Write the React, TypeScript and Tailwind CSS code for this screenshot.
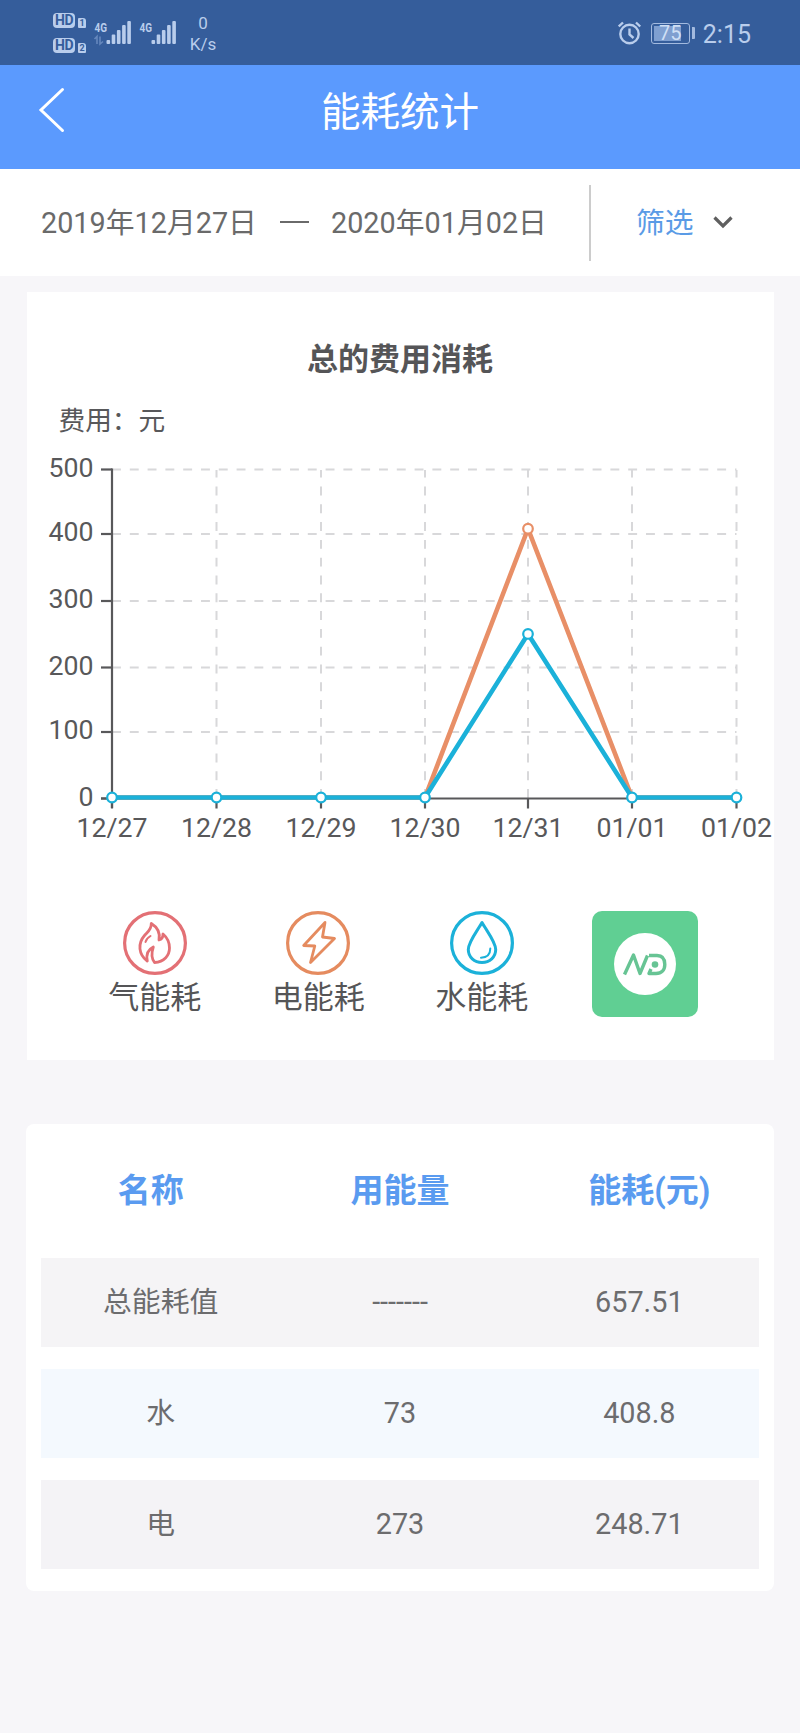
import type { ReactNode } from 'react';

const DAYS = [
  { label: '12/27', x: 112, electric: 0, water: 0 },
  { label: '12/28', x: 216.5, electric: 0, water: 0 },
  { label: '12/29', x: 321, electric: 0, water: 0 },
  { label: '12/30', x: 425, electric: 0, water: 0 },
  { label: '12/31', x: 528, electric: 408.8, water: 248.71 },
  { label: '01/01', x: 632, electric: 0, water: 0 },
  { label: '01/02', x: 736.5, electric: 0, water: 0 },
];

const Y_TICKS = [
  { value: 500, y: 469.5 },
  { value: 400, y: 534 },
  { value: 300, y: 601 },
  { value: 200, y: 667.5 },
  { value: 100, y: 732 },
  { value: 0, y: 798.5 },
];

const ROWS = [
  { name: '总能耗值', usage: '-------', cost: '657.51', bg: 'bg-[#f5f4f6]' },
  { name: '水', usage: '73', cost: '408.8', bg: 'bg-[#f4f9fe]' },
  { name: '电', usage: '273', cost: '248.71', bg: 'bg-[#f4f3f6]' },
];

const toY = (value: number) => 797.5 - value * 0.6575;

function HdBadge({ sim }: { sim: number }) {
  return (
    <div className="flex items-end gap-[3px]">
      <span className="w-[22px] h-[15px] rounded-[4px] bg-[#b9cdec] text-[#355d9b] text-[14px] leading-[15px] font-bold text-center tracking-[-0.5px]">
        HD
      </span>
      <span className="w-2 h-[10px] rounded-[1px] rounded-tr-[3px] bg-[#b9cdec] text-[#355d9b] text-[9px] leading-[10px] font-bold text-center">
        {sim}
      </span>
    </div>
  );
}

function Signal({ data }: { data?: boolean }) {
  return (
    <svg className="overflow-visible" width="38" height="26" viewBox="0 -2 38 26" fill="#b9cdec">
      <text x="0.5" y="10.500" fontSize="13.500" fontWeight="700" textLength="12.500" lengthAdjust="spacingAndGlyphs">
        4G
      </text>
      {data && (
        <path d="M0.5 18l2.5-2.500V23M6 15.500V23l3-2.500" fill="none" stroke="#6688bd" strokeWidth="1.600" />
      )}
      <rect x="12.500" y="19" width="3.600" height="4" rx="1" />
      <rect x="17.700" y="13.500" width="3.600" height="9.500" rx="1" />
      <rect x="22.900" y="9" width="3.600" height="14" rx="1" />
      <rect x="28.100" y="4" width="3.600" height="19" rx="1" />
      <rect x="33.300" y="0" width="3.600" height="23" rx="1" />
    </svg>
  );
}

function StatusBar() {
  return (
    <div className="h-[65px] bg-[#355d9b] text-[#b9cdec] flex items-start pl-[53px] pr-[49px]">
      <div className="flex flex-col gap-[10px] pt-[13px]">
        <HdBadge sim={1} />
        <HdBadge sim={2} />
      </div>
      <div className="flex gap-[7px] pt-[19px] ml-2">
        <Signal data />
        <Signal />
      </div>
      <div className="ml-[11px] pt-[13px] w-[30px] text-center text-[17px] leading-[20.5px]">
        <div>0</div>
        <div>K/s</div>
      </div>
      <div className="ml-auto flex items-center pt-[19px] h-[47px]">
        <svg width="24" height="24" viewBox="0 0 24 24" fill="none" stroke="#b9cdec" strokeWidth="2.400">
          <circle cx="11.500" cy="13" r="9.200" />
          <path d="M11.500 7.500v6l4 3.500M0.800 5.500L5 1.500M22.200 5.500L18 1.500" />
        </svg>
        <div className="ml-[9px] w-[39px] h-[21px] rounded-[3px] border border-[#a3badf] p-[2px]">
          <div className="w-[27px] h-[15px] flex bg-[#7f9fd0]">
            <span className="w-[33px] shrink-0 text-[20px] leading-[15px] text-center text-[#cfdff5]">75</span>
          </div>
        </div>
        <div className="ml-[2px] w-[3px] h-3 bg-[#a3badf] rounded-r-[1px]" />
        <span className="ml-[8px] mt-[2px] text-[25px] leading-none">2:15</span>
      </div>
    </div>
  );
}

function Header() {
  return (
    <header className="h-[104px] bg-[#5b9afe] grid grid-cols-[1fr_auto_1fr] items-start">
      <svg className="ml-[38px] mt-[21px]" width="28" height="48" viewBox="0 0 28 48" fill="none">
        <path d="M24.500 3.500L3 24l21.500 20.500" stroke="#fff" strokeWidth="3" strokeLinecap="round" />
      </svg>
      <h1 className="text-[39.500px] leading-[96px] text-white">能耗统计</h1>
    </header>
  );
}

function DateBar() {
  return (
    <div className="h-[107px] bg-white flex items-center pl-[41px] text-[28.800px] text-[#6a6a6a]">
      <span className="w-[217px] pt-[3px] whitespace-nowrap">2019年12月27日</span>
      <span className="ml-[22px] mb-[2px] w-[29px] h-[2px] bg-[#6a6a6a]" />
      <span className="ml-[22px] w-[217px] pt-[3px] whitespace-nowrap">2020年01月02日</span>
      <span className="ml-[41px] w-[2px] h-[76px] bg-[#ccc]" />
      <span className="ml-[45px] pt-[3px] text-[#5a9be6]">筛选</span>
      <svg className="ml-[18px] mb-[2px]" width="22" height="14" viewBox="0 0 22 14" fill="none">
        <path d="M2.500 2.500L11 11l8.500-8.500" stroke="#5f5f5f" strokeWidth="3.200" />
      </svg>
    </div>
  );
}

function CostChart() {
  return (
    <svg className="block" width="747" height="400" viewBox="27 450 747 400">
      {/* Grid */}
      <g stroke="#d8d8da" strokeWidth="2" strokeDasharray="8.900 8.900">
        {Y_TICKS.slice(0, 5).map((t) => (
          <line key={t.value} x1="112" x2="736.5" y1={t.y} y2={t.y} />
        ))}
        {DAYS.slice(1).map((d) => (
          <line key={d.label} x1={d.x} x2={d.x} y1="798" y2="470" />
        ))}
      </g>

      {/* Axes */}
      <g stroke="#58585a" strokeWidth="2.200">
        <line x1="112" x2="112" y1="468.5" y2="808" />
        <line x1="101" x2="736.5" y1="798.5" y2="798.5" />
        {Y_TICKS.map((t) => (
          <line key={t.value} x1="101" x2="112" y1={t.y} y2={t.y} />
        ))}
        {DAYS.map((d) => (
          <line key={d.label} x1={d.x} x2={d.x} y1="798" y2="808.5" />
        ))}
      </g>
      <g fill="#58585a" fontSize="26.700">
        {Y_TICKS.map((t) => (
          <text key={t.value} x="93.5" y={t.y + 7} textAnchor="end">
            {t.value}
          </text>
        ))}
        {DAYS.map((d) => (
          <text key={d.label} x={d.x} y="836.5" textAnchor="middle">
            {d.label}
          </text>
        ))}
      </g>

      {/* Series */}
      <g fill="none" strokeWidth="4.600" strokeLinejoin="bevel">
        <polyline points={DAYS.map((d) => `${d.x},${toY(d.electric)}`).join(' ')} stroke="#e88f67" />
        <polyline points={DAYS.map((d) => `${d.x},${toY(d.water)}`).join(' ')} stroke="#1bb1d9" />
      </g>
      <g fill="#fff" strokeWidth="2.200">
        <circle cx="528" cy={toY(408.8)} r="4.800" stroke="#e88f67" />
        {DAYS.map((d) => (
          <circle key={d.label} cx={d.x} cy={toY(d.water)} r="4.800" stroke="#1bb1d9" />
        ))}
      </g>
    </svg>
  );
}

function EnergyItem({ label, color, children }: { label: string; color: string; children: ReactNode }) {
  return (
    <div className="flex flex-col items-center">
      <svg width="64" height="64" viewBox="0 0 64 64" fill="none" stroke={color} strokeWidth="2.800" strokeLinejoin="round">
        <circle cx="32" cy="32" r="30.400" strokeWidth="3.200" />
        {children}
      </svg>
      <span className="text-[31px] leading-[46px] text-[#555557]">{label}</span>
    </div>
  );
}

function EnergyLegend() {
  return (
    <div className="grid grid-cols-4 w-[654px] mx-auto mt-[61px]">
      <EnergyItem label="气能耗" color="#e37075">
        <path d="M28.300 12.500C28.500 18.500 25 20.500 21.500 24.500C14.500 32.500 15.500 43.500 24.300 50C23 43.500 25 38.500 30.300 36C28 43 28.500 47.500 31.500 51.500C41.500 51 46.500 44 46.500 37C46.500 30.500 43.500 26 40 23C40 27 38.500 28.500 36 29C37.500 21.500 34 16 28.300 12.500Z" />
        <path d="M22.500 31C23 28.500 25 26.500 27.500 25" strokeWidth="2" strokeLinecap="round" />
      </EnergyItem>
      <EnergyItem label="电能耗" color="#e58b5f">
        <path d="M39 11.500L17.700 34.500L28.800 35L24.500 51.500L48.500 27.500L36.500 26Z" />
      </EnergyItem>
      <EnergyItem label="水能耗" color="#1bb1d9">
        <path d="M32 11.500C27.500 19.500 18.300 31 18.300 38.500C18.300 46 24.300 51.500 32 51.500C39.700 51.500 45.700 46 45.700 38.500C45.700 31 36.500 19.500 32 11.500Z" strokeWidth="3" />
        <path d="M40.300 37.500C40.300 43 37 46.500 31 46.700" strokeWidth="2" strokeLinecap="round" />
      </EnergyItem>
      <div className="w-[106px] h-[106px] rounded-[10px] bg-[#60cf93] mx-auto flex items-center justify-center">
        <svg width="62" height="62" viewBox="0 0 62 62" fill="none" stroke="#67c494" strokeWidth="3.400" strokeLinejoin="round">
          <circle cx="31" cy="31" r="31" fill="#fff" stroke="none" />
          <path d="M10.500 41.500L19.500 22L26 40.500L33.500 22.500" />
          <path d="M35 22.500H43C48.500 22.500 50.800 26 50.800 31.500C50.800 37 47.500 40.500 42 40.500H35L37 36" />
          <circle cx="41" cy="31.500" r="3.300" fill="#67c494" stroke="none" />
        </svg>
      </div>
    </div>
  );
}

function CostCard() {
  return (
    <section className="mx-[26.500px] mt-4 h-[768px] bg-white pt-[46px]">
      <h2 className="text-center text-[31px] leading-[44px] font-bold text-[#555557]">总的费用消耗</h2>
      <div className="mt-[21px] ml-8 h-[47px] text-[26.700px] leading-[36px] text-[#58585a]">费用：元</div>
      <CostChart />
      <EnergyLegend />
    </section>
  );
}

function EnergyTable() {
  return (
    <section className="mx-[26px] mt-16 h-[467px] rounded-lg bg-white">
      <div className="grid grid-cols-3 h-[134px] text-center text-[33px] leading-[134px] font-bold text-[#5a9bf0]">
        <span>名称</span>
        <span>用能量</span>
        <span>能耗(元)</span>
      </div>
      <div className="flex flex-col gap-[22px] mx-[15px]">
        {ROWS.map((row) => (
          <div
            key={row.name}
            className={`grid grid-cols-3 h-[89px] text-center text-[28.800px] leading-[89px] text-[#6c6c6e] ${row.bg}`}
          >
            <span>{row.name}</span>
            <span>{row.usage}</span>
            <span>{row.cost}</span>
          </div>
        ))}
      </div>
    </section>
  );
}

export default function App() {
  return (
    <div className="w-[800px] h-[1733px] overflow-hidden bg-[#f7f6f9] font-[Roboto,'Noto_Sans_CJK_SC',sans-serif]">
      <StatusBar />
      <Header />
      <DateBar />
      <CostCard />
      <EnergyTable />
    </div>
  );
}
